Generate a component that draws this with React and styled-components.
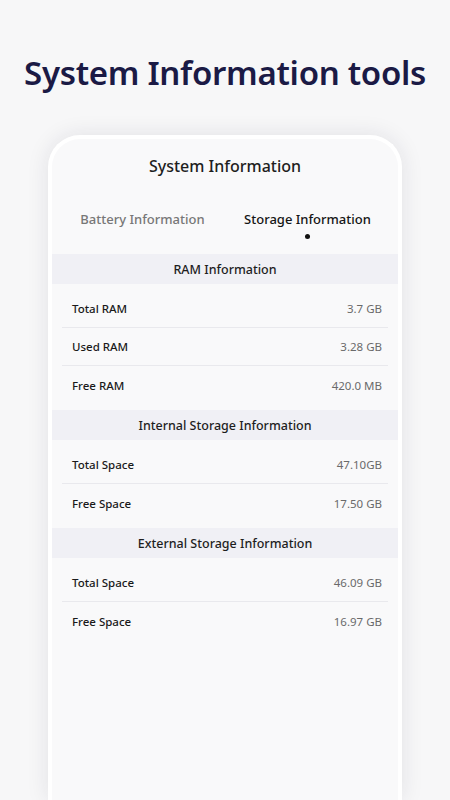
import React from 'react'
import styled, { createGlobalStyle } from 'styled-components'

const GlobalStyle = createGlobalStyle`
  html, body {
    margin: 0;
    padding: 0;
    background: #f7f7f8;
    overflow: hidden;
  }
  * { box-sizing: border-box; }
`

const Page = styled.div`
  width: 450px;
  height: 800px;
  padding-top: 52px;
  font-family: "Noto Sans", "Open Sans", sans-serif;
  display: flex;
  flex-direction: column;
  align-items: center;
`

const Headline = styled.h1`
  margin: 0;
  font-size: 33px;
  line-height: 42px;
  font-weight: 650;
  color: #1b1a45;
  letter-spacing: -0.3px;
`

const Phone = styled.div`
  margin-top: 41px;
  width: 354px;
  height: 720px;
  border: 4px solid #ffffff;
  border-bottom: none;
  border-radius: 32px 32px 0 0;
  background: #f9f9fa;
  box-shadow: 0 0 22px rgba(30, 30, 60, 0.1);
  overflow: hidden;
`

const ScreenTitle = styled.div`
  padding-top: 16px;
  text-align: center;
  font-size: 16px;
  line-height: 22px;
  font-weight: 500;
  color: #1e1e1e;
`

const Tabs = styled.div`
  display: flex;
  margin-top: 32px;
  padding: 0 8px;
`

const Tab = styled.div`
  flex: 1;
  display: flex;
  flex-direction: column;
  align-items: center;
  font-size: 13px;
  line-height: 20px;
  font-weight: 500;
  color: ${(p) => (p.active ? '#151515' : '#777777')};
`

const Dot = styled.span`
  width: 5px;
  height: 5px;
  margin-top: 5px;
  border-radius: 50%;
  background: ${(p) => (p.active ? '#111111' : 'transparent')};
`

const Spacer = styled.div`
  height: 15px;
`

const SectionHeader = styled.div`
  height: 30px;
  display: flex;
  align-items: center;
  justify-content: center;
  background: #f0f0f5;
  font-size: 12.5px;
  font-weight: 500;
  color: #1e1e1e;
`

const List = styled.div`
  padding: 6px 10px 6px;
`

const Row = styled.div`
  height: 38px;
  padding: 0 6px 0 10px;
  display: flex;
  align-items: center;
  justify-content: space-between;
  font-size: 11.5px;
  border-bottom: 1px solid #e9e9ed;

  &:last-child {
    height: 38px;
    border-bottom: none;
  }
`

const Label = styled.span`
  color: #1a1a1a;
  font-weight: 500;
`

const Value = styled.span`
  color: #6a6a6a;
`

const sections = [
  {
    title: 'RAM Information',
    rows: [
      ['Total RAM', '3.7 GB'],
      ['Used RAM', '3.28 GB'],
      ['Free RAM', '420.0 MB'],
    ],
  },
  {
    title: 'Internal Storage Information',
    rows: [
      ['Total Space', '47.10GB'],
      ['Free Space', '17.50 GB'],
    ],
  },
  {
    title: 'External Storage Information',
    rows: [
      ['Total Space', '46.09 GB'],
      ['Free Space', '16.97 GB'],
    ],
  },
]

const App = () => {
  return (
    <>
      <GlobalStyle />
      <Page>
        <Headline>System Information tools</Headline>
        <Phone>
          <ScreenTitle>System Information</ScreenTitle>
          <Tabs>
            <Tab>
              Battery Information
              <Dot />
            </Tab>
            <Tab active>
              Storage Information
              <Dot active />
            </Tab>
          </Tabs>
          <Spacer />
          {sections.map((section) => (
            <React.Fragment key={section.title}>
              <SectionHeader>{section.title}</SectionHeader>
              <List>
                {section.rows.map(([label, value]) => (
                  <Row key={label}>
                    <Label>{label}</Label>
                    <Value>{value}</Value>
                  </Row>
                ))}
              </List>
            </React.Fragment>
          ))}
        </Phone>
      </Page>
    </>
  )
}

export default App
